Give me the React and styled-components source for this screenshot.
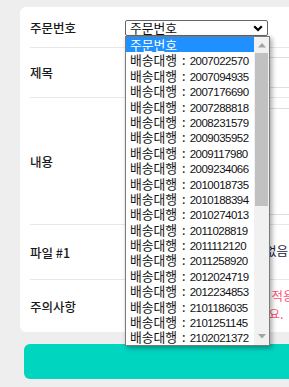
import React from "react";
import styled, { createGlobalStyle } from "styled-components";

const Global = createGlobalStyle`
  html, body { margin: 0; padding: 0; overflow: hidden; background: #eeeeee; }
  body { font-family: "Noto Sans CJK KR", "Noto Sans", sans-serif; color: #222; }
`;

const Page = styled.div`
  padding: 7px 0 8px 20px;
  width: 340px;
`;

const Card = styled.div`
  background: #fff;
  border-radius: 6px;
  padding: 0 10px;
`;

const Row = styled.div`
  display: grid;
  grid-template-columns: 95px 1fr;
  align-items: center;
  height: ${(p) => p.$h}px;
  border-bottom: ${(p) => (p.$last ? "none" : "1px solid #e8e8e8")};
`;

const Label = styled.div`
  font-size: 12.5px;
  font-weight: 500;
  color: #1a1a1a;
  white-space: nowrap;
`;

const SelectWrap = styled.div`
  position: relative;
  margin-top: 2px;
  width: 143px;
`;

const SelectBox = styled.div`
  box-sizing: border-box;
  height: 16px;
  border: 1px solid #666;
  border-radius: 2px;
  display: flex;
  align-items: center;
  justify-content: space-between;
  padding: 0 4px 0 4px;
  font-size: 12.8px;
  line-height: 14px;
  color: #111;
`;

const List = styled.div`
  position: absolute;
  top: 100%;
  left: 0;
  width: 145px;
  box-sizing: border-box;
  border: 1px solid #7a7a7a;
  background: #fff;
  display: flex;
  box-shadow: 2px 2px 5px rgba(0, 0, 0, 0.35);
  z-index: 5;
`;

const Items = styled.div`
  flex: 1;
  min-width: 0;
`;

const Item = styled.div`
  height: 15.4px;
  line-height: 15.4px;
  padding-left: 4px;
  font-size: 12.8px;
  white-space: nowrap;
  overflow: hidden;
  color: ${(p) => (p.$active ? "#fff" : "#111")};
  background: ${(p) => (p.$active ? "#1e90ff" : "transparent")};
`;

const Colon = styled.span`
  margin: 0 4px 0 5px;
`;

const Num = styled.span`
  font-family: "Liberation Sans", Arial, sans-serif;
  font-size: 11.5px;
  letter-spacing: -0.5px;
`;

const Scroll = styled.div`
  width: 15px;
  background: #f1f1f1;
  display: flex;
  flex-direction: column;
`;

const ArrowBtn = styled.div`
  height: 16px;
  display: flex;
  align-items: center;
  justify-content: center;
`;

const Track = styled.div`
  flex: 1;
  display: flex;
  flex-direction: column;
  padding: 0 1px;
`;

const Thumb = styled.div`
  height: 153px;
  background: #c1c1c1;
`;

const Input = styled.div`
  box-sizing: border-box;
  height: ${(p) => p.$h}px;
  width: 200px;
  border: 1px solid #dedede;
  border-radius: 2px;
`;

const FileLine = styled.div`
  display: flex;
  align-items: center;
  gap: 10px;
  font-size: 12.5px;
  color: #1a1a3a;
  white-space: nowrap;
  margin-top: -4px;
`;

const FileBtn = styled.span`
  border: 1px solid #999;
  background: #efefef;
  padding: 0 11px;
  font-size: 11px;
  line-height: 16px;
`;

const Notice = styled.div`
  color: #ff5577;
  font-size: 12.5px;
  line-height: 18px;
  white-space: nowrap;
  margin-top: -3px;
`;

const Submit = styled.div`
  margin: 12px 0 0 4px;
  height: 35px;
  background: #00d5c0;
  border-radius: 6px;
`;

const nums = [
  "2007022570", "2007094935", "2007176690", "2007288818", "2008231579",
  "2009035952", "2009117980", "2009234066", "2010018735", "2010188394",
  "2010274013", "2011028819", "2011112120", "2011258920", "2012024719",
  "2012234853", "2101186035", "2101251145", "2102021372",
];

const Chevron = () => (
  <svg width="10" height="7" viewBox="0 0 10 7">
    <path d="M1.2 1.2 L5 5 L8.8 1.2" fill="none" stroke="#000" strokeWidth="2.2" />
  </svg>
);

const Tri = ({ down }) => (
  <svg width="8" height="5" viewBox="0 0 8 5">
    <path d={down ? "M0 0 L8 0 L4 4.5 Z" : "M0 4.5 L8 4.5 L4 0 Z"} fill="#a3a3a3" />
  </svg>
);

export default function App() {
  return (
    <>
      <Global />
      <Page>
        <Card>
          <Row $h={40}>
            <Label>주문번호</Label>
            <SelectWrap>
              <SelectBox>
                <span>주문번호</span>
                <Chevron />
              </SelectBox>
              <List>
                <Items>
                  <Item $active>주문번호</Item>
                  {nums.map((n) => (
                    <Item key={n}>
                      배송대행<Colon>:</Colon><Num>{n}</Num>
                    </Item>
                  ))}
                </Items>
                <Scroll>
                  <ArrowBtn><Tri /></ArrowBtn>
                  <Track><Thumb /></Track>
                  <ArrowBtn><Tri down /></ArrowBtn>
                </Scroll>
              </List>
            </SelectWrap>
          </Row>
          <Row $h={49}>
            <Label>제목</Label>
            <Input $h={31} />
          </Row>
          <Row $h={126}>
            <Label>내용</Label>
            <Input $h={107} />
          </Row>
          <Row $h={54}>
            <Label>파일 #1</Label>
            <FileLine>
              <FileBtn>파일 선택</FileBtn>
              <span>선택된 파일 없음</span>
            </FileLine>
          </Row>
          <Row $h={52} $last>
            <Label>주의사항</Label>
            <Notice>
              <div>주문번호를 선택하면 내용이 적용됩니다.</div>
              <div>번호를 정확하게 선택해주세요.</div>
            </Notice>
          </Row>
        </Card>
        <Submit />
      </Page>
    </>
  );
}
